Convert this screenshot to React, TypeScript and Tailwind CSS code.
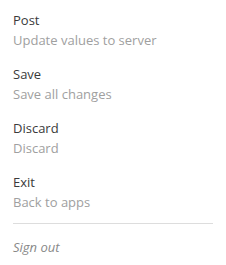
import React from 'react';

const items = [
  { title: 'Post', sub: 'Update values to server' },
  { title: 'Save', sub: 'Save all changes' },
  { title: 'Discard', sub: 'Discard' },
  { title: 'Exit', sub: 'Back to apps' },
];

const App = () => {
  return (
    <div className="w-[226px] h-[265px] bg-white px-[13px] pt-[10px] font-['Open_Sans',sans-serif] text-[13px] leading-[20px]">
      <div className="flex flex-col gap-[14px]">
        {items.map((item) => (
          <div key={item.title} className="flex flex-col cursor-pointer">
            <span className="text-[#3a3a3a]">{item.title}</span>
            <span className="text-[#a0a0a0]">{item.sub}</span>
          </div>
        ))}
      </div>
      <div className="mt-[11px] h-px bg-[#dddddd]" />
      <div className="mt-[13px] italic text-[#888888] cursor-pointer">Sign out</div>
    </div>
  );
};

export default App;
